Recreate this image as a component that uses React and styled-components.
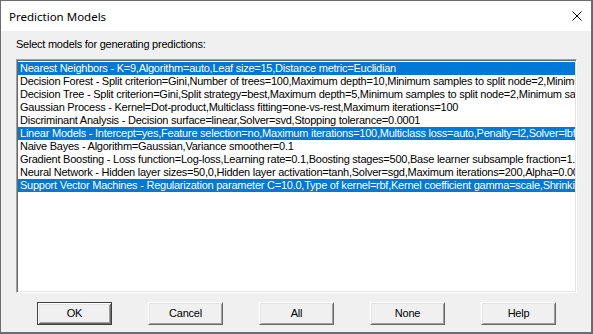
import React from "react";
import styled, { createGlobalStyle } from "styled-components";

const GlobalStyle = createGlobalStyle`
  html, body { margin: 0; padding: 0; background: #5d6b78; }
  * { box-sizing: border-box; }
`;

const Window = styled.div`
  width: 592px;
  height: 333px;
  border: 1px solid #6d6d6d;
  display: flex;
  flex-direction: column;
  background: #f0f0f0;
`;

const TitleBar = styled.div`
  height: 30px;
  flex: none;
  background: #ffffff;
  display: flex;
  align-items: center;
  justify-content: space-between;
  padding: 0 9px 0 8px;
  font-family: "Noto Sans", "Open Sans", sans-serif;
  font-size: 11.5px;
  color: #000;
`;

const CloseButton = styled.div`
  width: 10px;
  height: 10px;
  display: flex;
`;

const Body = styled.div`
  flex: 1;
  display: flex;
  flex-direction: column;
  padding: 7px 14px 7px 15px;
  font-family: "Liberation Sans", Arial, sans-serif;
  font-size: 11px;
  letter-spacing: -0.24px;
  color: #000;
`;

const Label = styled.div`
  line-height: 13px;
  height: 13px;
  margin-bottom: 8px;
`;

const ListBox = styled.div`
  height: 234px;
  width: 561px;
  border-style: solid;
  border-width: 1px;
  border-color: #a0a0a0 #ffffff #ffffff #a0a0a0;
  box-shadow: inset 1px 1px 0 #696969, inset -1px -1px 0 #e3e3e3;
  background: #ffffff;
  padding: 2px 1px 1px 1px;
  overflow: hidden;
`;

const Row = styled.div`
  height: 13px;
  line-height: 13px;
  padding-left: 2px;
  white-space: nowrap;
  overflow: hidden;
  background: ${(p) => (p.$selected ? "#0078d7" : "transparent")};
  color: ${(p) => (p.$selected ? "#ffffff" : "#000000")};
`;

const ButtonRow = styled.div`
  margin-top: 9px;
  display: flex;
  gap: 36px;
  padding-left: 21px;
`;

const Button = styled.div`
  width: 75px;
  height: 23px;
  display: flex;
  align-items: center;
  justify-content: center;
  background: #f0f0f0;
  border-style: solid;
  border-width: 1px;
  border-color: ${(p) => (p.$default ? "#404040" : "#ffffff #696969 #696969 #ffffff")};
  box-shadow: ${(p) =>
    p.$default
      ? "inset 1px 1px 0 #ffffff, inset -1px -1px 0 #696969, inset 2px 2px 0 #e3e3e3, inset -2px -2px 0 #a0a0a0"
      : "inset 1px 1px 0 #e3e3e3, inset -1px -1px 0 #a0a0a0"};
  line-height: 13px;
`;

const rows = [
  { t: "Nearest Neighbors - K=9,Algorithm=auto,Leaf size=15,Distance metric=Euclidian", s: true },
  { t: "Decision Forest - Split criterion=Gini,Number of trees=100,Maximum depth=10,Minimum samples to split node=2,Minimum samples in leaf=1" },
  { t: "Decision Tree - Split criterion=Gini,Split strategy=best,Maximum depth=5,Minimum samples to split node=2,Minimum samples in leaf=1" },
  { t: "Gaussian Process - Kernel=Dot-product,Multiclass fitting=one-vs-rest,Maximum iterations=100" },
  { t: "Discriminant Analysis - Decision surface=linear,Solver=svd,Stopping tolerance=0.0001" },
  { t: "Linear Models - Intercept=yes,Feature selection=no,Maximum iterations=100,Multiclass loss=auto,Penalty=l2,Solver=lbfgs", s: true },
  { t: "Naive Bayes - Algorithm=Gaussian,Variance smoother=0.1" },
  { t: "Gradient Boosting - Loss function=Log-loss,Learning rate=0.1,Boosting stages=500,Base learner subsample fraction=1.0" },
  { t: "Neural Network - Hidden layer sizes=50,0,Hidden layer activation=tanh,Solver=sgd,Maximum iterations=200,Alpha=0.0001" },
  { t: "Support Vector Machines - Regularization parameter C=10.0,Type of kernel=rbf,Kernel coefficient gamma=scale,Shrinking=yes", s: true },
];

export default function App() {
  return (
    <>
      <GlobalStyle />
      <Window>
        <TitleBar>
          <span>Prediction Models</span>
          <CloseButton>
            <svg width="10" height="10" viewBox="0 0 10 10">
              <path d="M0.5 0.5 L9.5 9.5 M9.5 0.5 L0.5 9.5" stroke="#000" strokeWidth="1" fill="none" />
            </svg>
          </CloseButton>
        </TitleBar>
        <Body>
          <Label>Select models for generating predictions:</Label>
          <ListBox>
            {rows.map((r, i) => (
              <Row key={i} $selected={r.s}>{r.t}</Row>
            ))}
          </ListBox>
          <ButtonRow>
            <Button $default>OK</Button>
            <Button>Cancel</Button>
            <Button>All</Button>
            <Button>None</Button>
            <Button>Help</Button>
          </ButtonRow>
        </Body>
      </Window>
    </>
  );
}
